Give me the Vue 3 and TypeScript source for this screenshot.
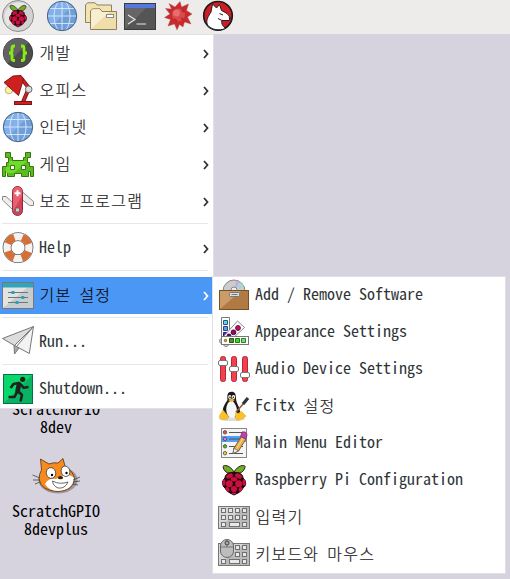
<script setup lang="ts">
interface Entry {
  label: string
  icon: string
  arrow?: boolean
  active?: boolean
}

const raspberry = `
  <path d="M16 8C12 1 6 .6 5 2.4C5.500 7 9 10 15 9.500ZM16 8C20 1 26 .6 27.200 2.400C26.500 7 23 10 17 9.500Z" fill="#75a928" stroke="#222b12" stroke-width="1"/>
  <path d="M16 8.500C11 8 7 10 7 14C3.500 17 4 22 7 24C9 28 12 29 16 31C20 29 23 28 25 24C28.500 22 28.500 17 25 14C25 10 21 8 16 8.500Z" fill="#210510" stroke="#210510"/>
  <g fill="#c9103f"><ellipse cx="11.500" cy="12" rx="3.600" ry="2.300" transform="rotate(-25 11.500 12)"/><ellipse cx="20.500" cy="12" rx="3.600" ry="2.300" transform="rotate(25 20.500 12)"/>
  <ellipse cx="16" cy="15.300" rx="3.200" ry="2.200"/><circle cx="11.300" cy="19.800" r="3.500"/><circle cx="20.700" cy="19.800" r="3.500"/>
  <ellipse cx="6" cy="18.500" rx="1.500" ry="3.300"/><ellipse cx="26" cy="18.500" rx="1.500" ry="3.300"/><circle cx="16" cy="25" r="3.100"/>
  <ellipse cx="9.500" cy="25.300" rx="1.800" ry="2.500" transform="rotate(-30 9.500 25.300)"/><ellipse cx="22.500" cy="25.300" rx="1.800" ry="2.500" transform="rotate(30 22.500 25.300)"/><ellipse cx="16" cy="29.500" rx="2.500" ry="1"/></g>`

const keys = (rows: number[][]) =>
  rows.map(([x, y, w]) => `<rect x="${x}" y="${y}" width="${w}" height="4" fill="#e8e8e8" stroke="#707070"/>`).join('')

const icons: Record<string, string> = {
  raspberry,
  raspberryMenu: `<circle cx="16" cy="16" r="15.500" fill="#d2d2d2" stroke="#8e8e8e"/><path d="M5.500 26.500A15 15 0 0 1 26.500 5.500Z" fill="#e6e6e6"/><g transform="translate(4.300 4.300) scale(.73)">${raspberry}</g>`,
  globe: `<circle cx="16" cy="16" r="14.700" fill="#6f9fd8"/><path d="M5.600 26.400A14.700 14.700 0 0 1 26.400 5.600Z" fill="#82b0e8"/>
    <path d="M1.500 16H30.500M16 1.500V30.500M4 8.500H28M4 23.500H28M12.500 2C6.500 8 6.500 24 12.500 30M19.500 2C25.500 8 25.500 24 19.500 30" fill="none" stroke="#dbe9fa" stroke-width=".9"/><circle cx="16" cy="16" r="14.700" fill="none" stroke="#4a6380"/>`,
  folders: `<path d="M.5 22.500V5L2.500 2.800H10L12 5H26.500V22.500Z" fill="#f2e3b2" stroke="#8f8257"/><path d="M5.500 29.500V11L7.500 8.800H15L17 11.500H31.500V29.500Z" fill="#f0deaa" stroke="#8f8257"/><path d="M6 29V11.200L7.700 9.300H14.700L16.700 12H24Z" fill="#f8efd0"/><rect x="21.500" y="14.500" width="7" height="3" fill="#fff" stroke="#888"/>`,
  terminal: `<rect x=".5" y="3.500" width="31" height="26" fill="#555" stroke="#3b3b3b"/><path d="M1 29V8H22Z" fill="#666"/><rect x="1" y="4" width="30" height="4" fill="#5578dc"/><path d="M4 15L11 19.500L4 24M12.500 24H22" fill="none" stroke="#e8e8e8" stroke-width="1.200"/>`,
  star: `<path d="M6 3.500L12 7L17 1.500L18.500 7L25.500 4L23.500 10.500L29 14L24.500 17L28 24L21.500 22L20 27L16.500 24.500L14 30L11.500 24L5 26L7.500 19.500L1.500 17.500L7 14L2.500 8.500L8.500 9Z" fill="#c92b2d" stroke="#a05050" stroke-width=".4"/><circle cx="15.500" cy="15" r="6.500" fill="#d9484a"/><circle cx="13.500" cy="13" r="3.500" fill="#e66e6e"/><path d="M18 18L21 20M11 19L14 21M19 10L21 12" stroke="#b51f22" stroke-width="1.500"/>`,
  wolf: `<circle cx="16" cy="15.800" r="14.300" fill="#cf1c25" stroke="#1a1a1a" stroke-width="1.600"/><path d="M5.500 25C3.500 20 6.500 16 9 12L10.500 4L14.500 8L17.500 4.500L19.500 10.500Q26 13 28.500 17.500L27 20.500L20 20.500Q18.500 24 23.500 28.500C17 31 9.500 30 5.500 25Z" fill="#fff" stroke="#222"/><path d="M17.500 13.500L21 15M20 20.500L16 18.500" stroke="#222"/><path d="M26.500 16.500L29 18L27.500 20Z" fill="#222"/>`,
  code: `<circle cx="16" cy="16" r="14.700" fill="#4c4c4c" stroke="#393939"/><path d="M5.600 26.400A14.700 14.700 0 0 1 26.400 5.600Z" fill="#626262"/><path d="M13 9H12Q10 9 10 11V14Q10 16 7 16Q10 16 10 18V21.500Q10 23.500 12 23.500H13M19 9H20Q22 9 22 11V14Q22 16 25 16Q22 16 22 18V21.500Q22 23.500 20 23.500H19" fill="none" stroke="#83ee13" stroke-width="2.800"/>`,
  lamp: `<circle cx="7" cy="16" r="3.800" fill="#fff1a0" stroke="#9d9461" stroke-width=".7"/><path d="M19 4L27 14L21 28" fill="none" stroke="#6d1515" stroke-width="4"/><path d="M19 4L27 14L21 28" fill="none" stroke="#cf2222" stroke-width="2.500"/><path d="M2 8.500L11 2L19 1.500L21.500 5L16.500 21.500Z" fill="#cf2020" stroke="#7c1717"/><circle cx="26.700" cy="15.300" r="3.300" fill="#ddd" stroke="#666"/><rect x="12.500" y="27.500" width="17" height="3" fill="#cf2020" stroke="#7c1717"/>`,
  invader: `<path d="M3.500 4.500H8.500V9.500H10.500V12.500H21.500V9.500H23.500V4.500H28.500V9.500H25.500V14.500H27.500V18.500H31.500V28.500H28.500V23.500H26.500V28.500H19.500V25.500H12.500V28.500H5.500V23.500H3.500V28.500H.5V18.500H4.500V14.500H6.500V9.500H3.500Z" fill="#5dbb22" stroke="#35760f"/><path d="M7 13H25L12 25H4V19H7Z" fill="#6fdc2a"/><path d="M8.500 17.500H12.500V21.500H8.500ZM19.500 17.500H23.500V21.500H19.500Z" fill="#fff" stroke="#35760f"/>`,
  knife: `<path d="M.5 11.500H4L11 18V25L.5 15ZM20.500 7L31.500 16.500V20.500H27.500L20.500 15Z" fill="#eee" stroke="#888"/><rect x="10.500" y="1.500" width="10" height="29" rx="5" fill="#d94055" stroke="#87303c"/><path d="M11 26V6.500A4.500 4.500 0 0 1 20 6.500V11Z" fill="#ea6071"/><path d="M15.500 5.300V11.300M12.500 8.300H18.500" stroke="#fff" stroke-width="2"/><rect x="13.500" y="23" width="4" height="4" rx="1" fill="#ccc" stroke="#666"/>`,
  help: `<circle cx="16" cy="15.700" r="11" fill="none" stroke="#666" stroke-width="8.800"/><circle cx="16" cy="15.700" r="11" fill="none" stroke="#f3f3f3" stroke-width="7.200"/><circle cx="16" cy="15.700" r="11" fill="none" stroke="#d96e34" stroke-width="7.200" stroke-dasharray="9.280 8" stroke-dashoffset="-4"/>`,
  panel: `<rect x=".5" y="3.500" width="31" height="26" fill="#c9cccc" stroke="#777"/><path d="M1 29V8H26Z" fill="#e2e3e3"/><rect x="1" y="4" width="30" height="4.500" fill="#2fa6bb"/><path d="M6 13.500H26M6 18.500H26M6 23.500H26" stroke="#6b7779"/><path d="M9.500 12H12.500V15H9.500ZM19.300 17H22.300V20H19.300ZM13.500 22H16.500V25H13.500Z" fill="#25a5bc"/>`,
  plane: `<path d="M12 19L12.500 28L17 22Z" fill="#aaa" stroke="#777"/><path d="M31.500 .5L.5 12.500L12.500 19.500Z" fill="#ddd" stroke="#777" stroke-linejoin="round"/><path d="M31.500 .5L14.500 20.500L27.300 27.500Z" fill="#f3f3f3" stroke="#777" stroke-linejoin="round"/>`,
  exit: `<rect x="1.500" y="1.500" width="29" height="29" fill="#0cb263" stroke="#087141"/><path d="M2 30V2H30Z" fill="#08d86b"/><circle cx="20.700" cy="6.300" r="2.600" fill="#1d241f"/><path d="M17 11L15.500 18.500" stroke="#1d241f" stroke-width="4.600" stroke-linecap="round"/><path d="M17 10L11.500 11L8.500 15M18.500 11L21.500 14.800L26.500 14M16 18L20 22L18.500 28.500M15 19L12.500 24L6.500 24" fill="none" stroke="#1d241f" stroke-width="2.600" stroke-linejoin="round"/>`,
  software: `<circle cx="16" cy="12" r="11" fill="#ccc" stroke="#888"/><path d="M16 12L22 3L26 7Z" fill="#a5d9d1"/><path d="M16 12L18 1.500L22 3Z" fill="#cda9dd"/><circle cx="16" cy="11" r="3" fill="#eee" stroke="#888"/><rect x="1.500" y="11.500" width="29" height="19" fill="#b07a44" stroke="#75502b"/><path d="M2 30V12H23Z" fill="#cb9c68"/><rect x="11.500" y="13.500" width="10" height="4" rx="1" fill="#ddd" stroke="#777"/><path d="M13.500 15.500H19.500" stroke="#777"/>`,
  swatches: `<path d="M3.500 1.500H11.500V22.500H3.500Z" fill="#fff" stroke="#777"/><path d="M5.500 4.500H9.500V8.500H5.500Z" fill="#5bd5f4" stroke="#245a70"/><path d="M5.500 10.500H9.500V14.500H5.500Z" fill="#6795f2" stroke="#26468e"/><path d="M5.500 16.500H9.500V20.500H5.500Z" fill="#4338c4" stroke="#24206e"/><path d="M19.500 5L26.500 11.500L13 24L6 20Z" fill="#fff" stroke="#888"/><circle cx="20" cy="12" r="2.400" fill="#c30d62" stroke="#700938"/><circle cx="15.500" cy="16.300" r="2.400" fill="#920b63" stroke="#550738"/><circle cx="11" cy="20" r="2.400" fill="#55105f"/><circle cx="4" cy="25" r="2.500" fill="#ddd" stroke="#888"/><circle cx="8" cy="28" r="2.500" fill="#ddd" stroke="#888"/><rect x="3.500" y="20.500" width="27" height="8" fill="#fff" stroke="#777"/><circle cx="7.500" cy="24.500" r="1.200" fill="#e2aa22" stroke="#776020"/><path d="M11.500 22.500H15.500V26.500H11.500Z" fill="#469526" stroke="#285317"/><path d="M17.500 22.500H21.500V26.500H17.500Z" fill="#3cdd1b" stroke="#257715"/><path d="M23.500 22.500H27.500V26.500H23.500Z" fill="#6be963" stroke="#347830"/>`,
  sliders: `<g fill="#f3404f" stroke="#b32b38"><rect x="2.500" y="3.500" width="5" height="25" rx="2"/><rect x="13.500" y="3.500" width="5" height="25" rx="2"/><rect x="24.500" y="3.500" width="5" height="25" rx="2"/></g><g fill="#fff" stroke="#777"><rect x=".5" y="7.500" width="9" height="5" rx="1.500"/><rect x="11.500" y="13.500" width="9" height="5" rx="1.500"/><rect x="22.500" y="19.500" width="9" height="5" rx="1.500"/></g>`,
  tux: `<ellipse cx="14" cy="29" rx="13" ry="2" fill="#ddd"/><path d="M13.500 1.700C9.500 1.700 9 5 9.500 10C7 14 4.500 17 5 22L8 27H19L22 22C22 17 18.500 14 18 9C18 4 17 1.700 13.500 1.700Z" fill="#191919"/><path d="M13.500 10C9.500 12 7.500 17 8.500 22Q10 28 14 28Q19 27 19 21C19 16 16 12 13.500 10Z" fill="#f6f6f6"/><ellipse cx="11.800" cy="7" rx="1.600" ry="2" fill="#fff"/><ellipse cx="15.500" cy="7" rx="1.700" ry="2" fill="#fff"/><circle cx="12" cy="7.200" r=".8"/><circle cx="15.300" cy="7.200" r=".8"/><path d="M10 10L13.500 8.500L17 10L13.500 12Z" fill="#f1b322"/><path d="M5 20L11 27Q9 31 3 29Q0 28 2.500 24ZM18 22Q21 25 23 21L28 26Q26 28.500 20 30.500Q16 30 18 22Z" fill="#fac22a" stroke="#e0a51e" stroke-width=".5"/><path d="M18 22L26 13" stroke="#8e5c34" stroke-width="1.600"/><path d="M25 14L30 8" stroke="#30343a" stroke-width="3.200"/>`,
  editor: `<rect x="3.500" y="1.500" width="25" height="29" fill="#f5f5f5" stroke="#888"/><rect x="4" y="9" width="24" height="6" fill="#50a1f7"/><path d="M11 5.500H25M11 12H25M11 19.500H25M11 26.500H25" stroke="#555"/><g stroke="#555" stroke-width=".9"><circle cx="7" cy="5.300" r="1.700" fill="#f14e48"/><circle cx="7" cy="12" r="1.700" fill="#eb74f1"/><circle cx="7" cy="19.300" r="1.700" fill="#31c818"/><circle cx="7" cy="26.200" r="1.700" fill="#efdf19"/></g><path d="M15 26.500L16 21L23.500 9.500L28 12L20.500 24Z" fill="#e9ae4e" stroke="#805c29"/><path d="M18 23L25 11" stroke="#fbda8e"/><path d="M15 26.500L16 21L20.500 24Z" fill="#eee" stroke="#555" stroke-width=".7"/><path d="M22.500 9.500L24 5Q29 4 29 8.500L27.500 12Z" fill="#c33faf" stroke="#762969" stroke-width=".7"/>`,
  keyboard: `<rect x=".5" y="5.500" width="31" height="22" fill="#b9b9b9" stroke="#777"/><path d="M1 27V6H26Z" fill="#d6d6d6"/>${keys([[3.5, 7.5, 4], [10.5, 7.5, 4], [17.5, 7.5, 4], [24.5, 7.5, 4], [3.5, 14.5, 4], [10.5, 14.5, 4], [17.5, 14.5, 4], [24.5, 14.5, 4], [3.5, 21.5, 4], [11.5, 21.5, 10], [24.5, 21.5, 4]])}`,
  mouse: `<rect x=".5" y="5.500" width="31" height="22" fill="#b9b9b9" stroke="#777"/><path d="M1 27V6H26Z" fill="#d6d6d6"/>${keys([[17.5, 7.5, 4], [24.5, 7.5, 4], [17.5, 14.5, 4], [24.5, 14.5, 4], [3.5, 21.5, 4], [11.5, 21.5, 10], [24.5, 21.5, 4]])}<rect x="2.500" y="1.500" width="13" height="18" rx="6.500" fill="#bdbdbd" stroke="#666"/><path d="M3 9H15M9 1.500V9" stroke="#777"/><circle cx="9" cy="5" r="2" fill="#aaa" stroke="#444"/>`,
}

const launchers = ['raspberryMenu', 'globe', 'folders', 'terminal', 'star', 'wolf']

const groups: Entry[][] = [
  [
    { label: '개발', icon: 'code', arrow: true },
    { label: '오피스', icon: 'lamp', arrow: true },
    { label: '인터넷', icon: 'globe', arrow: true },
    { label: '게임', icon: 'invader', arrow: true },
    { label: '보조 프로그램', icon: 'knife', arrow: true },
  ],
  [{ label: 'Help', icon: 'help', arrow: true }],
  [{ label: '기본 설정', icon: 'panel', arrow: true, active: true }],
  [{ label: 'Run...', icon: 'plane' }],
  [{ label: 'Shutdown...', icon: 'exit' }],
]

const preferences: Entry[] = [
  { label: 'Add / Remove Software', icon: 'software' },
  { label: 'Appearance Settings', icon: 'swatches' },
  { label: 'Audio Device Settings', icon: 'sliders' },
  { label: 'Fcitx 설정', icon: 'tux' },
  { label: 'Main Menu Editor', icon: 'editor' },
  { label: 'Raspberry Pi Configuration', icon: 'raspberry' },
  { label: '입력기', icon: 'keyboard' },
  { label: '키보드와 마우스', icon: 'mouse' },
]

const runs = (label: string) => label.split(/([가-힣]+)/).filter(Boolean)
const isHangul = (run: string) => /[가-힣]/.test(run)
</script>

<template>
  <main class="screen">
    <header class="taskbar">
      <svg v-for="name in launchers" :key="name" class="icon" viewBox="0 0 32 32" v-html="icons[name]" />
    </header>

    <div class="shortcut shortcut-dev"><span>ScratchGPIO</span><span>8dev</span></div>
    <div class="shortcut shortcut-plus">
      <svg class="cat" viewBox="0 0 50 38">
        <ellipse cx="27" cy="23" rx="19.500" ry="13.500" fill="#9b98a2" />
        <path d="M8 22Q8 17 10.500 13L9.500 2L18 7Q23 5 27 6L32 1.500L34 9Q43 15 43.500 22Q42 34 27 34.500Q10 34 8 22Z" fill="#f68a1e" stroke="#51330f" stroke-width=".8" />
        <path d="M14 27Q17 21 25 22L31 19Q40 17 43 21Q42 33 27 34Q18 34 14 27Z" fill="#fff" />
        <g fill="#fff" stroke="#444" stroke-width=".8"><ellipse cx="20" cy="16" rx="4.700" ry="5.400" transform="rotate(-15 20 16)" /><ellipse cx="34.500" cy="14.300" rx="4.300" ry="5.300" transform="rotate(-15 34.500 14.300)" /></g>
        <circle cx="21" cy="18" r="1.200" /><circle cx="35.500" cy="16" r="1.200" />
        <ellipse cx="29.500" cy="20.700" rx="2.600" ry="1.600" fill="#35210d" />
        <path d="M21.500 24Q29 28 37 25Q34 32 27 31Q22 29 21.500 24Z" fill="#fff" stroke="#444" stroke-width=".8" />
        <path d="M1.500 18L9 21M2 23H9M4 27L9 25M42 23L49 20M42 25L49 24M42 27L47 28" fill="none" stroke="#444" stroke-width=".8" />
      </svg>
      <span>ScratchGPIO</span><span>8devplus</span>
    </div>

    <nav class="menu main-menu">
      <div v-for="(group, index) in groups" :key="index" class="group">
        <div v-for="entry in group" :key="entry.label" class="row" :class="{ active: entry.active }">
          <svg class="icon" viewBox="0 0 32 32" v-html="icons[entry.icon]" />
          <span class="label"><span v-for="(run, i) in runs(entry.label)" :key="i" :class="{ hangul: isHangul(run) }">{{ run }}</span></span>
          <svg v-if="entry.arrow" class="arrow" viewBox="0 0 6 10"><path d="M1 1L4.500 5L1 9" /></svg>
        </div>
      </div>
    </nav>

    <nav class="menu submenu">
      <div v-for="entry in preferences" :key="entry.label" class="row">
        <svg class="icon" viewBox="0 0 32 32" v-html="icons[entry.icon]" />
        <span class="label"><span v-for="(run, i) in runs(entry.label)" :key="i" :class="{ hangul: isHangul(run) }">{{ run }}</span></span>
      </div>
    </nav>
  </main>
</template>

<style>
body {
  margin: 0;
  overflow: hidden;
}
</style>

<style scoped>
.screen {
  position: relative;
  width: 510px;
  height: 579px;
  overflow: hidden;
  background: #d6d3de;
  color: #2e3436;
  font: 16px/18px "Noto Sans Mono CJK KR", "DejaVu Sans Mono", "Noto Sans CJK KR", monospace;
}
.taskbar {
  display: flex;
  gap: 7px;
  height: 34px;
  padding-left: 2px;
  background: #edeceb;
}
.icon {
  display: block;
  flex: none;
  width: 32px;
  height: 32px;
}
.taskbar .icon:first-child {
  margin-right: 5px;
}
.menu {
  position: absolute;
  box-sizing: border-box;
  background: #fff;
  border: 1px solid #e2e0e4;
}
.main-menu {
  top: 34px;
  left: 0;
  width: 214px;
  height: 375px;
  border-left: 0;
}
.submenu {
  top: 276px;
  left: 212px;
  width: 294px;
  height: 298px;
}
.group + .group::before {
  content: "";
  display: block;
  height: 1px;
  margin: 3px 5px 6px 2px;
  background: #e6e6e6;
}
.row {
  display: flex;
  align-items: center;
  gap: 5px;
  height: 37px;
  box-sizing: border-box;
  padding: 0 4px 1px 2px;
}
.submenu .row {
  padding-left: 5px;
}
.active {
  background: #4b97f5;
}
.label {
  flex: 1;
  padding-bottom: 4px;
  white-space: pre;
}
.hangul {
  padding-left: 0.6px;
  margin-right: -0.6px;
  letter-spacing: 1.2px;
  line-height: 14px;
  font-family: "Noto Sans CJK KR", sans-serif;
  font-weight: 300;
  vertical-align: -1px;
  color: #1c2023;
  -webkit-text-stroke: 0.2px #1c2023;
}
.active .hangul {
  color: #000;
}
.arrow {
  width: 6px;
  height: 10px;
  margin-top: 1px;
  fill: none;
  stroke: #2e3436;
  stroke-width: 1.8;
}
.active .arrow {
  stroke: #fff;
}
.shortcut {
  position: absolute;
  left: 0;
  width: 112px;
  display: flex;
  flex-direction: column;
  align-items: center;
  color: #000;
}
.shortcut-dev {
  top: 399px;
}
.shortcut-plus {
  top: 457px;
}
.cat {
  width: 50px;
  height: 38px;
  margin-bottom: 6px;
}
</style>
